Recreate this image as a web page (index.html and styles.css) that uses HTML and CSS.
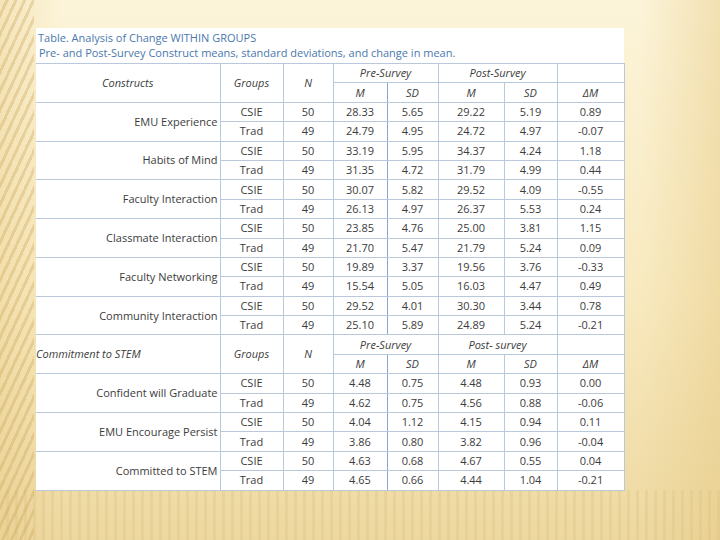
FILE: index.html
```html
<!DOCTYPE html>
<html>
<head>
<meta charset="utf-8">
<link rel="stylesheet" href="styles.css">
</head>
<body>
<div class="sheet">
  <div class="title">Table. Analysis of Change WITHIN GROUPS</div>
  <div class="subtitle">Pre- and Post-Survey Construct means, standard deviations, and change in mean.</div>
  <table class="data">
    <colgroup>
      <col class="c-con"><col class="c-grp"><col class="c-n"><col class="c-m1"><col class="c-sd1"><col class="c-m2"><col class="c-sd2"><col class="c-dm">
    </colgroup>
    <tbody>
      <tr class="hd">
        <td rowspan="2" class="it">Constructs</td>
        <td rowspan="2" class="it">Groups</td>
        <td rowspan="2" class="it">N</td>
        <td colspan="2" class="it">Pre-Survey</td>
        <td colspan="2" class="it">Post-Survey</td>
        <td></td>
      </tr>
      <tr class="hd">
        <td class="it pre-m">M</td><td class="it">SD</td><td class="it">M</td><td class="it">SD</td><td class="it">ΔM</td>
      </tr>

      <tr><td rowspan="2" class="con">EMU Experience</td><td>CSIE</td><td>50</td><td class="pre-m">28.33</td><td>5.65</td><td>29.22</td><td>5.19</td><td>0.89</td></tr>
      <tr><td>Trad</td><td>49</td><td class="pre-m">24.79</td><td>4.95</td><td>24.72</td><td>4.97</td><td>-0.07</td></tr>
      <tr><td rowspan="2" class="con">Habits of Mind</td><td>CSIE</td><td>50</td><td class="pre-m">33.19</td><td>5.95</td><td>34.37</td><td>4.24</td><td>1.18</td></tr>
      <tr><td>Trad</td><td>49</td><td class="pre-m">31.35</td><td>4.72</td><td>31.79</td><td>4.99</td><td>0.44</td></tr>
      <tr><td rowspan="2" class="con">Faculty Interaction</td><td>CSIE</td><td>50</td><td class="pre-m">30.07</td><td>5.82</td><td>29.52</td><td>4.09</td><td>-0.55</td></tr>
      <tr><td>Trad</td><td>49</td><td class="pre-m">26.13</td><td>4.97</td><td>26.37</td><td>5.53</td><td>0.24</td></tr>
      <tr><td rowspan="2" class="con">Classmate Interaction</td><td>CSIE</td><td>50</td><td class="pre-m">23.85</td><td>4.76</td><td>25.00</td><td>3.81</td><td>1.15</td></tr>
      <tr><td>Trad</td><td>49</td><td class="pre-m">21.70</td><td>5.47</td><td>21.79</td><td>5.24</td><td>0.09</td></tr>
      <tr><td rowspan="2" class="con">Faculty Networking</td><td>CSIE</td><td>50</td><td class="pre-m">19.89</td><td>3.37</td><td>19.56</td><td>3.76</td><td>-0.33</td></tr>
      <tr><td>Trad</td><td>49</td><td class="pre-m">15.54</td><td>5.05</td><td>16.03</td><td>4.47</td><td>0.49</td></tr>
      <tr><td rowspan="2" class="con">Community Interaction</td><td>CSIE</td><td>50</td><td class="pre-m">29.52</td><td>4.01</td><td>30.30</td><td>3.44</td><td>0.78</td></tr>
      <tr><td>Trad</td><td>49</td><td class="pre-m">25.10</td><td>5.89</td><td>24.89</td><td>5.24</td><td>-0.21</td></tr>

      <tr class="hd">
        <td rowspan="2" class="it left">Commitment to STEM</td>
        <td rowspan="2" class="it">Groups</td>
        <td rowspan="2" class="it">N</td>
        <td colspan="2" class="it">Pre-Survey</td>
        <td colspan="2" class="it">Post- survey</td>
        <td></td>
      </tr>
      <tr class="hd">
        <td class="it pre-m">M</td><td class="it">SD</td><td class="it">M</td><td class="it">SD</td><td class="it">ΔM</td>
      </tr>

      <tr><td rowspan="2" class="con">Confident will Graduate</td><td>CSIE</td><td>50</td><td class="pre-m">4.48</td><td>0.75</td><td>4.48</td><td>0.93</td><td>0.00</td></tr>
      <tr><td>Trad</td><td>49</td><td class="pre-m">4.62</td><td>0.75</td><td>4.56</td><td>0.88</td><td>-0.06</td></tr>
      <tr><td rowspan="2" class="con">EMU Encourage Persist</td><td>CSIE</td><td>50</td><td class="pre-m">4.04</td><td>1.12</td><td>4.15</td><td>0.94</td><td>0.11</td></tr>
      <tr><td>Trad</td><td>49</td><td class="pre-m">3.86</td><td>0.80</td><td>3.82</td><td>0.96</td><td>-0.04</td></tr>
      <tr><td rowspan="2" class="con">Committed to STEM</td><td>CSIE</td><td>50</td><td class="pre-m">4.63</td><td>0.68</td><td>4.67</td><td>0.55</td><td>0.04</td></tr>
      <tr><td>Trad</td><td>49</td><td class="pre-m">4.65</td><td>0.66</td><td>4.44</td><td>1.04</td><td>-0.21</td></tr>
    </tbody>
  </table>
</div>
</body>
</html>
```

FILE: styles.css
```css
html, body {
  margin: 0;
  padding: 0;
}
body {
  width: 720px;
  height: 540px;
  overflow: hidden;
  font-family: "Open Sans", "DejaVu Sans", sans-serif;
  background:
    repeating-linear-gradient(115deg, rgba(205,165,90,0) 0 5px, rgba(205,165,90,0.35) 5px 8px) left top / 34px 100% no-repeat,
    repeating-linear-gradient(90deg, rgba(215,185,120,0) 0 6px, rgba(215,185,120,0.25) 6px 9px) left bottom / 100% 50px no-repeat,
    linear-gradient(90deg, rgba(230,200,130,0.35) 0, rgba(230,200,130,0) 60px, rgba(230,200,130,0) 640px, rgba(230,200,130,0.45) 720px),
    linear-gradient(180deg, #fcf4d9 0%, #f8eac0 55%, #edd8a0 100%);
}
.sheet {
  margin: 28px 0 0 36px;
  width: 588px;
  height: 462px;
  background: #ffffff;
  color: #3c3c3c;
}
.title {
  color: #4a78ad;
  font-size: 11px;
  line-height: 15px;
  padding: 2px 0 0 2px;
}
.subtitle {
  color: #4a78ad;
  font-size: 11px;
  line-height: 15px;
  padding: 0 0 0 3px;
  height: 18px;
}
.data {
  border-collapse: collapse;
  table-layout: fixed;
  width: 588px;
  font-size: 11px;
}
.c-con { width: 184px; }
.c-grp { width: 63px; }
.c-n { width: 50px; }
.c-m1 { width: 54px; }
.c-sd1 { width: 51px; }
.c-m2 { width: 66px; }
.c-sd2 { width: 53px; }
.c-dm { width: 67px; }
.data tr { height: 19.4px; }
.data td {
  padding: 0;
  text-align: center;
  vertical-align: middle;
  border: 1px solid #b9c8da;
  line-height: 14px;
  white-space: nowrap;
}
.data tr td:first-child { border-left: none; }
.data td.con {
  text-align: right;
  padding-right: 2px;
}
.data td.it {
  font-style: italic;
}
.data td.left {
  text-align: left;
}
.data td.pre-m {
  border-right: 1.5px solid #86a6d6;
}
```
